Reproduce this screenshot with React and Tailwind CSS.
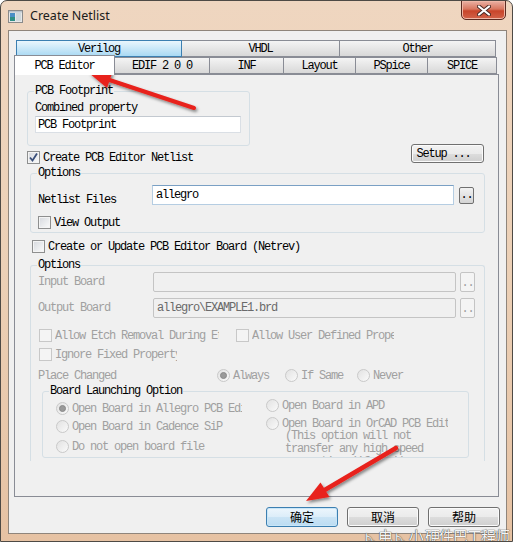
import React from "react";

// Win7 style "Create Netlist" dialog
const mono =
  "font-['Liberation_Mono','Courier_New',monospace] text-[12px] leading-[12px] tracking-[-1.2px] whitespace-nowrap";
const dim = "text-[#a0a0a0]";

function CheckBox({ checked, disabled }) {
  return (
    <span
      className={`relative inline-flex w-[13px] h-[13px] shrink-0 border ${
        disabled
          ? "border-[#c8c8c8] bg-[#f4f4f4]"
          : "border-[#8e8f8f] bg-gradient-to-br from-[#d6d9de] to-[#fbfbfb] shadow-[inset_0_0_0_1px_#f4f4f4]"
      }`}
    >
      {checked && (
        <svg width="11" height="11" viewBox="0 0 11 11" className="absolute left-0 top-0">
          <path d="M2 5.5 L4.5 8.5 L9 1.5" fill="none" stroke="#3a4f7a" strokeWidth="1.8" />
        </svg>
      )}
    </span>
  );
}

function Radio({ checked }) {
  return (
    <span className="relative inline-flex w-[13px] h-[13px] shrink-0 rounded-full border border-[#c9c9c9] bg-gradient-to-br from-[#e2e2e2] to-[#fafafa]">
      {checked && (
        <span className="absolute left-[2px] top-[2px] w-[7px] h-[7px] rounded-full bg-[#9a9a9a] border border-[#8a8a8a]" />
      )}
    </span>
  );
}

function Group({ label, className, children }) {
  return (
    <div className={`relative border border-[#d5dfe5] rounded-[3px] ${className}`}>
      <span className={`absolute -top-[7px] left-[6px] px-[1px] bg-[#f0f0f0] text-black ${mono}`}>{label}</span>
      {children}
    </div>
  );
}

function DotsBtn({ disabled, className }) {
  return (
    <span
      className={`flex items-end justify-center w-[15px] rounded-[2px] border pb-[2px] ${
        disabled
          ? "border-[#c4c4c4] bg-[#f4f4f4] text-[#a0a0a0]"
          : "border-[#707070] bg-gradient-to-b from-[#f2f2f2] to-[#d4d4d4] text-black"
      } ${className} ${mono}`}
    >
      ..
    </span>
  );
}

function WinBtn({ children, focused, className }) {
  return (
    <div
      className={`flex items-center justify-center rounded-[3px] border ${
        focused
          ? "border-[#3c7fb1] bg-[linear-gradient(#edf6fc,#dcedf9_50%,#cbe4f5_50%,#bcdcf2)] shadow-[inset_0_0_0_1px_#c9e6f8]"
          : "border-[#707070] bg-[linear-gradient(#f2f2f2,#ebebeb_50%,#dddddd_50%,#cfcfcf)] shadow-[inset_0_0_0_1px_#fbfbfb]"
      } ${className}`}
    >
      {children}
    </div>
  );
}

function Tab({ label, w, hot }) {
  return (
    <div
      className={`flex items-center justify-center h-full border -ml-px first:ml-0 ${
        hot
          ? "border-[#3c7fb1] bg-gradient-to-b from-[#eaf6fd] to-[#a9d9f3] relative z-[1]"
          : "border-[#898c95] bg-gradient-to-b from-[#f4f4f4] to-[#d8d8d8]"
      } ${mono}`}
      style={{ width: w }}
    >
      {label}
    </div>
  );
}

export default function App() {
  return (
    <div className="relative w-[513px] h-[542px] overflow-hidden rounded-t-[7px] border border-[#4e4a45] bg-gradient-to-b from-[#efd6c0] via-[#ecd0b6] to-[#e6c2a3] font-['Noto_Sans',sans-serif]">
      {/* title bar */}
      <div className="flex justify-between h-[29px]">
        <div className="flex items-center pl-[7px] pt-[2px]">
          <svg width="15" height="13" viewBox="0 0 15 13">
            <rect x="0.5" y="0.5" width="14" height="12" fill="#e8e8e8" stroke="#8a8a8a" />
            <rect x="2" y="3" width="5" height="8" fill="#2f8f86" />
            <rect x="2" y="3" width="5" height="4" fill="#4a8fc6" />
            <rect x="8" y="3" width="5" height="8" fill="#cfd8dc" />
            <rect x="1" y="1" width="13" height="1.5" fill="#b9c3cc" />
          </svg>
          <span className="ml-[7px] text-[12.5px] text-[#1b1b1b]">Create Netlist</span>
        </div>
        <div className="mr-[6px] w-[45px] h-[20px] -mt-px rounded-b-[5px] border border-[#5b2b22] bg-[linear-gradient(#eab1a4,#d8765f_45%,#c8452b_55%,#d2634a)] shadow-[inset_0_0_0_1px_#f0b7a6] flex items-center justify-center">
          <svg width="14" height="11" viewBox="0 0 14 11">
            <path d="M2 1.5 L12 9.5 M12 1.5 L2 9.5" stroke="#4a2a25" strokeWidth="4" strokeLinecap="round" />
            <path d="M2 1.5 L12 9.5 M12 1.5 L2 9.5" stroke="#ffffff" strokeWidth="2.2" strokeLinecap="round" />
          </svg>
        </div>
      </div>

      {/* client area */}
      <div className="ml-[7px] w-[499px] h-[504px] border border-[#8f857b] bg-[#f0f0f0] flex flex-col">
        <div className="ml-[5px] w-[485px] flex flex-col">
          {/* tab rows */}
          <div className="flex ml-[2px] mt-[9px] h-[17px]">
            <Tab label="Verilog" w={166} hot />
            <Tab label="VHDL" w={159} />
            <Tab label="Other" w={157} />
          </div>
          <div className="flex items-end h-[17px]">
            <div className={`relative z-10 flex items-center justify-center w-[101px] h-[20px] -mb-px pt-[1px] border border-b-0 border-[#898c95] bg-white ${mono}`}>
              PCB Editor
            </div>
            <Tab label="EDIF 2 0 0" w={96} />
            <Tab label="INF" w={75} />
            <Tab label="Layout" w={73} />
            <Tab label="PSpice" w={73} />
            <Tab label="SPICE" w={70} />
          </div>

          {/* tab page */}
          <div className="h-[423px] border border-[#898c95] flex flex-col pl-[12px] pr-[14px] overflow-hidden">
            <Group label="PCB Footprint" className="mt-[16px] w-[223px] h-[55px] pl-[7px] pt-[10px]">
              <div className={`text-black ${mono}`}>Combined property</div>
              <div className={`mt-[2px] w-[206px] h-[17px] bg-white border border-[#dadfe5] border-t-[#c3c9d0] pl-[2px] pt-[2px] ${mono}`}>
                PCB Footprint
              </div>
            </Group>

            <div className="flex justify-between h-[20px] -mt-[2px]">
              <div className="flex items-center self-end gap-[3px]">
                <CheckBox checked />
                <span className={`text-black ${mono}`}>Create PCB Editor Netlist</span>
              </div>
              <WinBtn className="w-[73px] h-[19px]">
                <span className={`${mono} -ml-[8px]`}>Setup ...</span>
              </WinBtn>
            </div>

            <Group label="Options" className="mt-[9px] ml-[3px] w-[455px] h-[60px] pl-[7px] pt-[11px]">
              <div className="flex h-[20px]">
                <span className={`w-[114px] self-end -mb-px text-black ${mono}`}>Netlist Files</span>
                <div className={`w-[302px] h-[20px] bg-white border border-[#b5cde2] border-t-[#7aa0c4] pl-[3px] pt-[3px] ${mono}`}>
                  allegro
                </div>
                <DotsBtn className="ml-[5px] h-[17px] self-center" />
              </div>
              <div className="flex items-center gap-[3px] mt-[11px]">
                <CheckBox />
                <span className={`text-black ${mono}`}>View Output</span>
              </div>
            </Group>

            <div className="flex items-center gap-[3px] mt-[7px] ml-[5px]">
              <CheckBox />
              <span className={`text-black ${mono}`}>Create or Update PCB Editor Board (Netrev)</span>
            </div>

            <Group label="Options" className="mt-[12px] ml-[3px] w-[455px] h-[196px] border-b-0 rounded-b-none pl-[7px] pt-[6px]">
              <div className="flex items-center h-[20px]">
                <span className={`w-[115px] ${dim} ${mono}`}>Input Board</span>
                <div className="w-[303px] h-[20px] border border-[#c4c4c4] rounded-[2px] bg-[#f0f0f0]" />
                <DotsBtn disabled className="ml-[4px] h-[20px]" />
              </div>
              <div className="flex items-center h-[20px] mt-[6px]">
                <span className={`w-[115px] ${dim} ${mono}`}>Output Board</span>
                <div className={`w-[303px] h-[20px] border border-[#c4c4c4] rounded-[2px] bg-[#f0f0f0] pl-[3px] pt-[3px] text-[#6a6a6a] ${mono}`}>
                  allegro\EXAMPLE1.brd
                </div>
                <DotsBtn disabled className="ml-[4px] h-[20px]" />
              </div>

              <div className="flex items-center mt-[11px] ml-px">
                <div className="flex items-center gap-[3px] w-[197px]">
                  <CheckBox disabled />
                  <span className={`w-[164px] overflow-hidden ${dim} ${mono}`}>Allow Etch Removal During Etch</span>
                </div>
                <div className="flex items-center gap-[3px]">
                  <CheckBox disabled />
                  <span className={`w-[142px] overflow-hidden ${dim} ${mono}`}>Allow User Defined Property</span>
                </div>
              </div>
              <div className="flex items-center gap-[3px] mt-[6px] ml-px">
                <CheckBox disabled />
                <span className={`w-[122px] overflow-hidden ${dim} ${mono}`}>Ignore Fixed Property</span>
              </div>

              <div className="flex items-center mt-[8px]">
                <span className={`w-[179px] ${dim} ${mono}`}>Place Changed</span>
                <div className="flex items-center gap-[3px] w-[68px]">
                  <Radio checked />
                  <span className={`${dim} ${mono}`}>Always</span>
                </div>
                <div className="flex items-center gap-[3px] w-[72px]">
                  <Radio />
                  <span className={`${dim} ${mono}`}>If Same</span>
                </div>
                <div className="flex items-center gap-[3px]">
                  <Radio />
                  <span className={`${dim} ${mono}`}>Never</span>
                </div>
              </div>

              <Group label="Board Launching Option" className="mt-[9px] ml-[4px] w-[427px] h-[67px]">
                <div className="h-full overflow-hidden grid grid-cols-[210px_1fr] pl-[13px]">
                  <div className="flex flex-col pt-[10px]">
                    <div className="flex items-center gap-[3px]">
                      <Radio checked />
                      <span className={`w-[170px] overflow-hidden ${dim} ${mono}`}>Open Board in Allegro PCB Editor</span>
                    </div>
                    <div className="flex items-center gap-[3px] mt-[5px]">
                      <Radio />
                      <span className={`${dim} ${mono}`}>Open Board in Cadence SiP</span>
                    </div>
                    <div className="flex items-center gap-[3px] mt-[7px]">
                      <Radio />
                      <span className={`${dim} ${mono}`}>Do not open board file</span>
                    </div>
                  </div>
                  <div className="flex flex-col pt-[7px]">
                    <div className="flex items-center gap-[3px]">
                      <Radio />
                      <span className={`${dim} ${mono}`}>Open Board in APD</span>
                    </div>
                    <div className="flex items-center gap-[3px] mt-[5px]">
                      <Radio />
                      <span className={`w-[166px] overflow-hidden ${dim} ${mono}`}>Open Board in OrCAD PCB Editor</span>
                    </div>
                    <div className={`ml-[19px] leading-[13px] ${dim} ${mono}`}>
                      (This option will not
                      <br />
                      transfer any high speed
                      <br />
                      properties (if any))
                    </div>
                  </div>
                </div>
              </Group>
            </Group>
          </div>

          {/* dialog buttons */}
          <div className="flex justify-end gap-[9px] mt-[10px] -mr-px font-['Noto_Sans_CJK_SC',sans-serif] text-[12px] text-black">
            <WinBtn focused className="w-[72px] h-[20px]">确定</WinBtn>
            <WinBtn className="w-[72px] h-[20px]">取消</WinBtn>
            <WinBtn className="w-[72px] h-[20px]">帮助</WinBtn>
          </div>
        </div>
      </div>

      {/* annotation arrows */}
      <svg className="absolute left-0 top-0 pointer-events-none" width="513" height="542" viewBox="0 0 513 542">
        <defs>
          <filter id="sh" x="-20%" y="-20%" width="140%" height="140%">
            <feDropShadow dx="1.5" dy="2" stdDeviation="1.5" floodColor="#000" floodOpacity="0.45" />
          </filter>
        </defs>
        <g filter="url(#sh)" fill="#e8211b" stroke="#e8211b">
          <line x1="193" y1="107" x2="107" y2="78.5" strokeWidth="4" strokeLinecap="round" />
          <polygon points="88,72 111.5,71 106,87" stroke="none" />
          <line x1="395" y1="447" x2="322" y2="490" strokeWidth="4.5" strokeLinecap="round" />
          <polygon points="305,500 328.5,496 319.5,481.5" stroke="none" />
        </g>
      </svg>

      {/* watermark */}
      <div className="absolute right-[3px] -bottom-[3px] font-['Noto_Sans_CJK_SC',sans-serif] text-[15px] leading-[17px] text-[#f4f4f4] [text-shadow:0_0_1px_#444,0_0_1px_#444] tracking-[-1px]">
        ⊾ 电 ⊾ 小 硬件巴工程师
      </div>
    </div>
  );
}
